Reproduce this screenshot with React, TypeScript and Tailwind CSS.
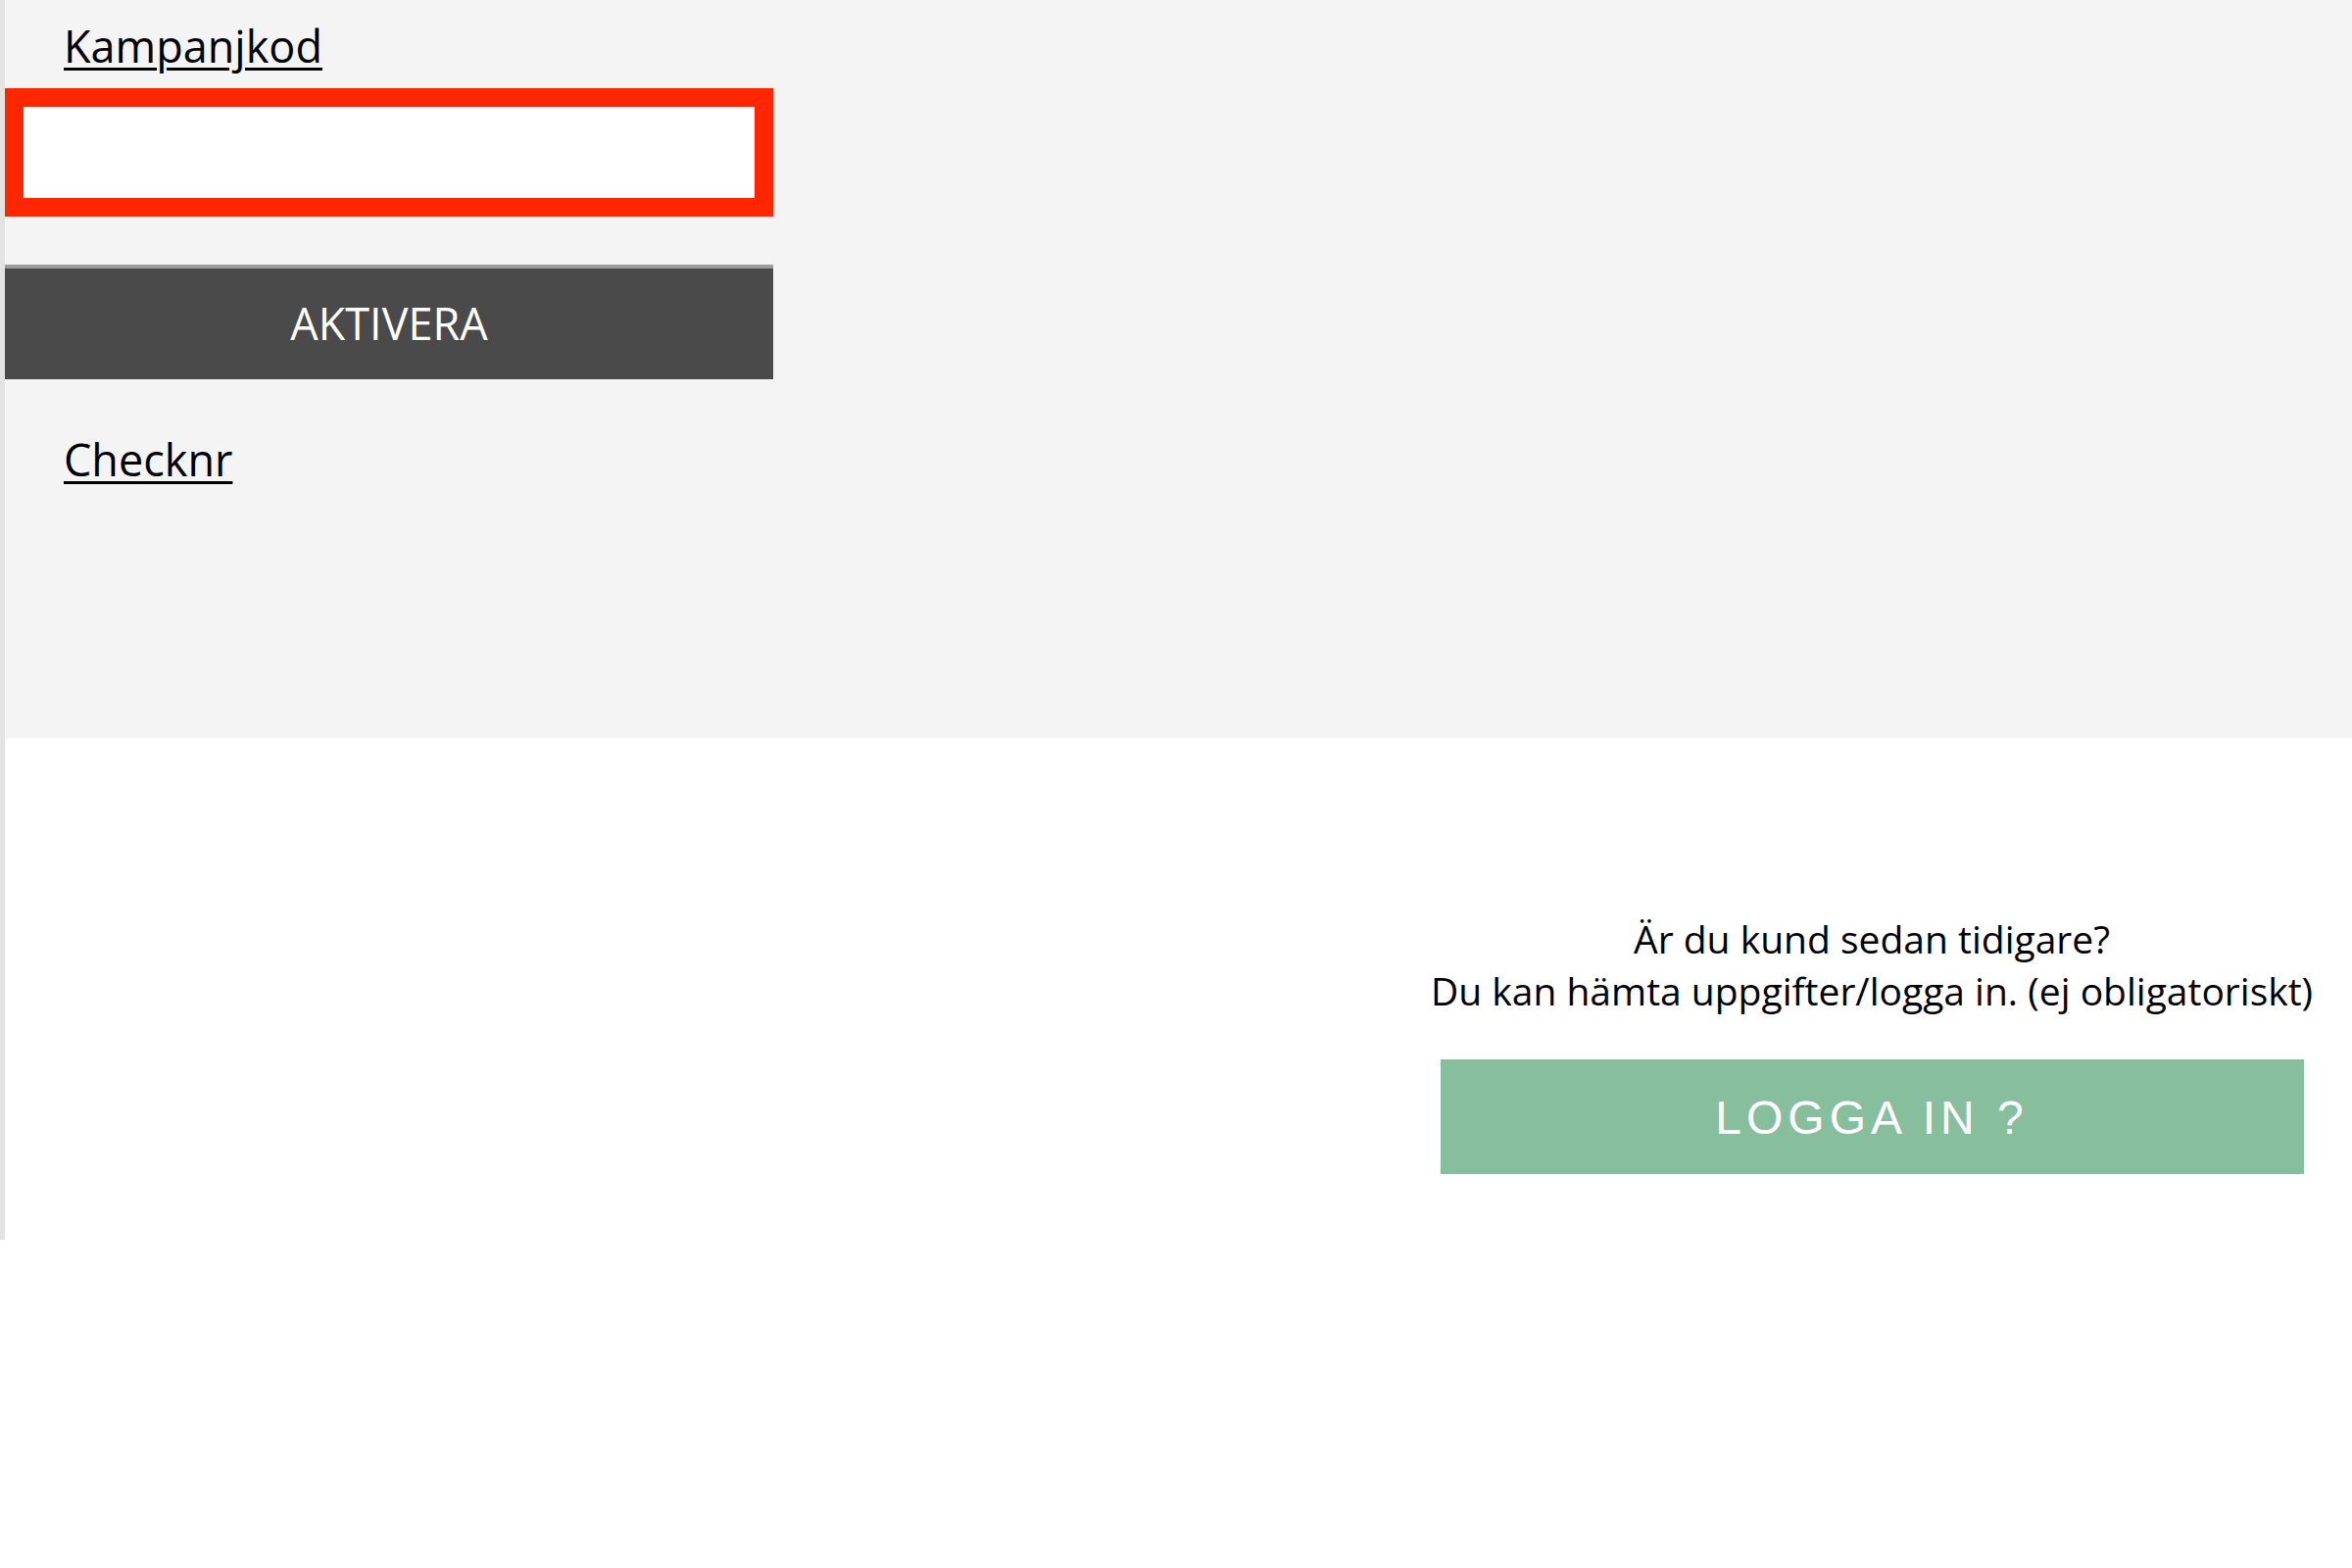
import React from "react";

export default function App() {
  return (
    <div className="w-[2400px] min-h-[1600px] bg-white" style={{ fontFamily: "'Open Sans', 'Noto Sans', sans-serif" }}>
      <div className="h-[1265px] border-l-[5px] border-[#e3e3e3] flex flex-col">
        <div className="h-[753px] bg-[#f3f4f3]">
          <div className="w-[784px] flex flex-col">
            <div className="pt-[16px] pl-[60px] h-[90px]">
              <a href="#" className="text-[45px] leading-[62px] text-black underline decoration-[3px] underline-offset-[5px]">
                Kampanjkod
              </a>
            </div>
            <input
              type="text"
              className="h-[131px] w-[784px] border-[19px] border-[#ff2600] bg-white outline-none"
            />
            <button className="mt-[49px] h-[117px] w-[784px] border-t-4 border-[#9c9c9c] bg-[#4a4a4a] flex items-center justify-center text-white text-[45px] leading-[62px] pb-[2px]">
              AKTIVERA
            </button>
            <div className="pt-[51px] pl-[60px]">
              <a href="#" className="text-[45px] leading-[62px] text-black underline decoration-[3px] underline-offset-[5px]">
                Checknr
              </a>
            </div>
          </div>
        </div>
        <div className="flex-1 bg-white flex justify-end pr-[20px]">
          <div className="w-[940px] pt-[178px] flex flex-col items-center">
            <p className="text-[39px] leading-[53px] text-black text-center whitespace-nowrap">
              Är du kund sedan tidigare?
              <br />
              Du kan hämta uppgifter/logga in. (ej obligatoriskt)
            </p>
            <button
              className="mt-[44px] h-[117px] w-[881px] bg-[#87bf9e] text-white text-[48px] tracking-[5px] flex items-center justify-center pt-[2px]"
              style={{ fontFamily: "'Liberation Sans', Arial, sans-serif" }}
            >
              LOGGA IN ?
            </button>
          </div>
        </div>
      </div>
    </div>
  );
}
